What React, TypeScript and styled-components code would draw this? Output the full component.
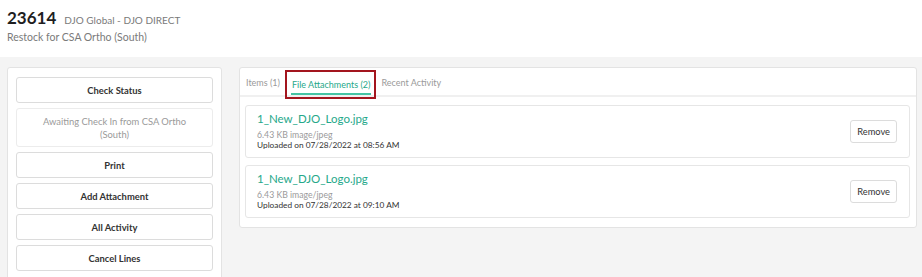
import React from "react";
import styled, { createGlobalStyle } from "styled-components";

const GlobalStyle = createGlobalStyle`
  html, body {
    margin: 0;
    padding: 0;
    background: #f4f4f4;
    font-family: Lato, "Open Sans", sans-serif;
    color: #333;
    overflow: hidden;
  }
`;

const actions = [
  { label: "Check Status" },
  { label: "Awaiting Check In from CSA Ortho (South)", disabled: true },
  { label: "Print" },
  { label: "Add Attachment" },
  { label: "All Activity" },
  { label: "Cancel Lines" },
];

const files = [
  { name: "1_New_DJO_Logo.jpg", meta: "6.43 KB image/jpeg", uploaded: "Uploaded on 07/28/2022 at 08:56 AM" },
  { name: "1_New_DJO_Logo.jpg", meta: "6.43 KB image/jpeg", uploaded: "Uploaded on 07/28/2022 at 09:10 AM" },
];

export default function App() {
  return (
    <>
      <GlobalStyle />
      <Header>
        <TitleRow>
          <OrderNo>23614</OrderNo>
          <Vendor>DJO Global - DJO DIRECT</Vendor>
        </TitleRow>
        <Subtitle>Restock for CSA Ortho (South)</Subtitle>
      </Header>
      <Body>
        <Sidebar>
          {actions.map((a) => (
            <ActionButton key={a.label} $disabled={a.disabled}>
              {a.label}
            </ActionButton>
          ))}
        </Sidebar>
        <Content>
          <Tabs>
            <Tab>Items (1)</Tab>
            <Highlight>
              <Tab $active>File Attachments (2)</Tab>
            </Highlight>
            <Tab>Recent Activity</Tab>
          </Tabs>
          <FileList>
            {files.map((f) => (
              <FileCard key={f.uploaded}>
                <FileInfo>
                  <FileName>{f.name}</FileName>
                  <FileMeta>{f.meta}</FileMeta>
                  <FileDate>{f.uploaded}</FileDate>
                </FileInfo>
                <RemoveButton>Remove</RemoveButton>
              </FileCard>
            ))}
          </FileList>
        </Content>
      </Body>
    </>
  );
}

const Header = styled.header`
  background: #fff;
  height: 57px;
  padding: 8px 7px 0;
  box-sizing: border-box;
`;

const TitleRow = styled.div`
  display: flex;
  align-items: baseline;
  gap: 8px;
`;

const OrderNo = styled.h1`
  margin: 0;
  font-size: 17px;
  font-weight: 700;
  color: #1e1e1e;
  line-height: 20px;
`;

const Vendor = styled.span`
  font-size: 10px;
  color: #7a7a7a;
`;

const Subtitle = styled.div`
  font-size: 10.5px;
  color: #7a7a7a;
  margin-top: 3px;
`;

const Body = styled.main`
  display: flex;
  align-items: flex-start;
  gap: 17px;
  padding: 10px 5px 0 7px;
`;

const Sidebar = styled.aside`
  width: 215px;
  flex-shrink: 0;
  height: 230px;
  box-sizing: border-box;
  background: #fff;
  border: 1px solid #e3e3e3;
  border-radius: 3px;
  padding: 9px 8px;
  display: flex;
  flex-direction: column;
  gap: 5px;
`;

const ActionButton = styled.button<{ $disabled?: boolean }>`
  background: #fff;
  border: 1px solid ${(p) => (p.$disabled ? "#ececec" : "#dcdcdc")};
  border-radius: 3px;
  padding: 6px 20px 5px;
  font-family: inherit;
  font-size: 9.4px;
  line-height: 13px;
  font-weight: ${(p) => (p.$disabled ? 400 : 700)};
  color: ${(p) => (p.$disabled ? "#9a9a9a" : "#333")};
`;

const Content = styled.section`
  flex: 1;
  background: #fff;
  border: 1px solid #e3e3e3;
  border-radius: 3px;
  padding-bottom: 9px;
`;

const Tabs = styled.nav`
  display: flex;
  align-items: stretch;
  height: 27px;
  padding-left: 5px;
  border-bottom: 2px solid #f0f0f0;
  gap: 4px;
`;

const Highlight = styled.div`
  display: flex;
  border: 2px solid #a3151e;
  margin: 2px 0 -4px;
  padding: 0 3px 2px 4px;
`;

const Tab = styled.div<{ $active?: boolean }>`
  display: flex;
  align-items: center;
  font-size: 9px;
  padding: 3px 1px 0;
  color: ${(p) => (p.$active ? "#26a88a" : "#9a9a9a")};
  border-bottom: 2px solid ${(p) => (p.$active ? "#45c3a4" : "transparent")};
`;

const FileList = styled.div`
  display: flex;
  flex-direction: column;
  gap: 7px;
  padding: 8px 6px 0 5px;
`;

const FileCard = styled.div`
  display: flex;
  align-items: center;
  justify-content: space-between;
  border: 1px solid #e6e6e6;
  border-radius: 3px;
  padding: 5px 11px 6px 11px;
`;

const FileInfo = styled.div`
  display: flex;
  flex-direction: column;
`;

const FileName = styled.div`
  font-size: 11.5px;
  color: #26a88a;
  line-height: 16px;
  margin-bottom: 2px;
`;

const FileMeta = styled.div`
  font-size: 8.7px;
  color: #9a9a9a;
  line-height: 11px;
`;

const FileDate = styled.div`
  font-size: 8.3px;
  color: #333;
  line-height: 11px;
`;

const RemoveButton = styled.button`
  background: #fff;
  border: 1px solid #dcdcdc;
  border-radius: 3px;
  height: 23px;
  padding: 0 6px;
  margin-right: 1px;
  font-family: inherit;
  font-size: 9.3px;
  color: #333;
`;
